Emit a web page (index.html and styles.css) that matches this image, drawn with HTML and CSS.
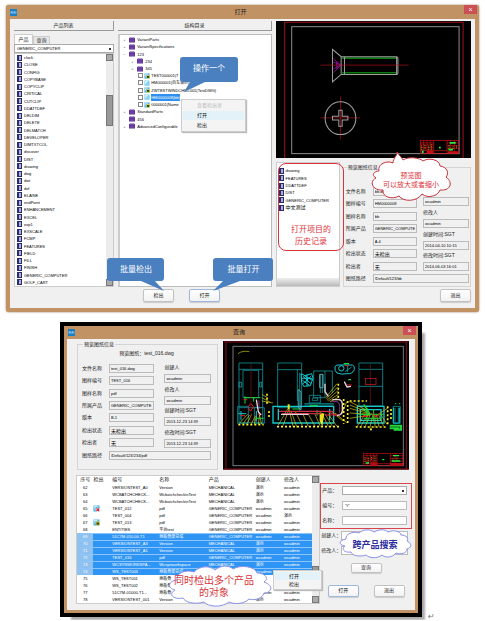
FILE: index.html
```html
<!DOCTYPE html>
<html lang="zh-CN">
<head>
    <meta charset="UTF-8">
    <meta name="viewport" content="width=device-width, initial-scale=1.0">
    <title>打开 / 查询</title>
    <link rel="stylesheet" href="styles.css">
</head>
<body>
<svg class="defs" width="0" height="0" aria-hidden="true">
    <symbol id="folder" viewBox="0 0 14 12">
        <rect x="0" y="1" width="14" height="11" rx="1" fill="#5a2a94"/>
        <rect x="2" y="0" width="4" height="3" fill="#8b62bd"/>
        <rect x="8" y="0" width="4" height="3" fill="#8b62bd"/>
        <path d="M1 6h12M1 9h12" stroke="#9a78c9"/>
    </symbol>
    <symbol id="doc" viewBox="0 0 16 16">
        <path d="M1 1h11l3 3v11H1z" fill="#7fd0f2"/>
        <path d="M3 4h7M3 7h5M3 10h3" stroke="#fff" stroke-width="2"/>
    </symbol>
    <symbol id="doc-lock" viewBox="0 0 16 16">
        <path d="M1 1h14v14H1z" fill="#58b7e6"/>
        <path d="M2 3h8M2 7h4" stroke="#fff" stroke-width="2"/>
        <circle cx="11" cy="10" r="5" fill="#f0d21c"/>
        <rect x="8" y="8" width="6" height="5" fill="#23402a"/>
    </symbol>
    <symbol id="doc-mark" viewBox="0 0 16 16">
        <path d="M1 1h14v14H1z" fill="#58b7e6"/>
        <path d="M2 3h8M2 7h4" stroke="#fff" stroke-width="2"/>
        <circle cx="11" cy="11" r="5" fill="#fff"/>
        <path d="M8 8l6 6M14 8l-6 6" stroke="#d8262c" stroke-width="3"/>
    </symbol>
    <symbol id="app" viewBox="0 0 18 18">
        <rect width="18" height="18" fill="#1c7fc4"/>
        <path d="M3 12V6l3 5V6M9 12l2-6 2 6M15 6v6" stroke="#bfe4ff" stroke-width="1.5" fill="none"/>
    </symbol>
</svg>

<!-- 打开窗口 -->
<section class="window open-window">
    <header class="titlebar">
        <svg class="app-icon"><use href="#app"/></svg>
        <h1>打开</h1>
        <button class="close" aria-label="关闭">×</button>
    </header>
    <div class="open-body">
        <div class="products">
            <h2 class="head">产品列表</h2>
            <div class="tabs">
                <button class="tab active">产品</button>
                <button class="tab">查询</button>
            </div>
            <select class="combo" aria-label="产品"><option>GENERIC_COMPUTER</option></select>
            <div class="list-box">
                <ul class="book-list">
                    <li>clock</li><li>CLOSE</li><li>CONFIG</li><li>COPYBASE</li>
                    <li>COPYCLIP</li><li>CRITICAL</li><li>CUTCLIP</li><li>DDATTDEF</li>
                    <li>DELDIM</li><li>DELETE</li><li>DELMATCH</li><li>DEVELOPER</li>
                    <li>DIMTXTCOL</li><li>discover</li><li>DIST</li><li>drawing</li>
                    <li>dwg</li><li>dwt</li><li>dxf</li><li>ELAINE</li>
                    <li>endPoint</li><li>ENHANCEMENT</li><li>EXCEL</li><li>exp1</li>
                    <li>EXSCALE</li><li>FCMP</li><li>FEATURES</li><li>FIELD</li>
                    <li>FILL</li><li>FINISH</li><li>GENERIC_COMPUTER</li><li>GOLF_CART</li>
                </ul>
                <div class="scrollbar"><i></i><b class="thumb"></b><i></i></div>
            </div>
        </div>

        <div class="structure">
            <h2 class="head">结构目录</h2>
            <div class="tree-box">
                <ul class="tree">
                    <li><span class="exp">+</span><svg><use href="#folder"/></svg>VariantParts</li>
                    <li><span class="exp">+</span><svg><use href="#folder"/></svg>VariantSpecifications</li>
                    <li><span class="exp">−</span><svg><use href="#folder"/></svg>123</li>
                    <li class="sub"><span class="exp">+</span><svg><use href="#folder"/></svg>234</li>
                    <li class="sub"><span class="exp">+</span><svg><use href="#folder"/></svg>345</li>
                    <li class="file"><label><input type="checkbox"><svg><use href="#doc-lock"/></svg><span>TEST000001(T</span></label></li>
                    <li class="file"><label><input type="checkbox"><svg><use href="#doc"/></svg><span>HM000001(自车演示)</span></label></li>
                    <li class="file"><label><input type="checkbox"><svg><use href="#doc-lock"/></svg><span>ZWTESTWINDCHILL001(TestDWG)</span></label></li>
                    <li class="file"><label><input type="checkbox"><svg><use href="#doc"/></svg><span class="selected">HM0000008(bb)</span></label></li>
                    <li class="file"><label><input type="checkbox"><svg><use href="#doc-lock"/></svg><span>0000001(Name</span></label></li>
                    <li><span class="exp">+</span><svg><use href="#folder"/></svg>StandardParts</li>
                    <li><span class="exp"></span><svg><use href="#folder"/></svg>456</li>
                    <li><span class="exp">+</span><svg><use href="#folder"/></svg>AdvancedConfigurable</li>
                </ul>
            </div>
        </div>

        <div class="detail">
            <svg class="preview" viewBox="18 67 585 411" role="img" aria-label="螺钉图纸">
                <rect x="18" y="67" width="585" height="411" fill="#000"/>
                <path d="M44 478V71H578V478" stroke="#a01018" stroke-width="3" fill="none"/>
                <rect x="65" y="84" width="501" height="380" stroke="#8c8c8c" stroke-width="3" fill="none"/>
                <path d="M216 178H380M216 222H380" stroke="#0b7a10" stroke-width="5"/>
                <path d="M187 152V249L213 227H379Q383 227 383 222V180Q383 174 379 174H213ZM213 174V227M223 174V227M379 174V227" stroke="#a0a0a0" stroke-width="3" fill="none"/>
                <path d="M190 180L212 199L190 222M190 190L212 199L190 210M200 190V210" stroke="#c016c8" stroke-width="2" fill="none"/>
                <path d="M151 199H415M151 357H270M211 293V422" stroke="#b3121c" stroke-width="2"/>
                <ellipse cx="211" cy="358" rx="46" ry="49" stroke="#a0a0a0" stroke-width="3" fill="none"/>
                <path d="M206 334H216V352H233V363H216V382H206V363H187V352H206Z" stroke="#a0a0a0" stroke-width="3" fill="none"/>
                <g fill="none" stroke="#d8101a" stroke-width="2">
                    <rect x="450" y="425" width="115" height="39"/>
                    <path d="M450 432H490M450 438H490M450 446H490M450 454H490M530 432H565M530 440H565M530 448H565M490 455H530M460 425V464M470 425V464M480 425V464M490 425V464M530 425V464M540 425V464M552 425V464"/>
                </g>
                <path d="M532 457h32v6h-32zM470 455h18v8h-18z" fill="#c80c14"/>
                <path d="M538 432H556M506 446h5M534 452h14M457 455v8" stroke="#24f03a" stroke-width="5"/>
                <path d="M454 440v14M464 438v16M475 440v14M484 436v18M536 438v12M548 442v10M558 440v10" stroke="#d8e020" stroke-width="2" stroke-dasharray="3 2"/>
            </svg>
            <div class="detail-lower">
                <div class="history">
                    <ul class="book-list">
                        <li>drawing</li><li>FEATURES</li><li>DDATTDEF</li>
                        <li>DIST</li><li>GENERIC_COMPUTER</li><li class="zh">中文测试</li>
                    </ul>
                    <div class="hscroll"></div>
                </div>
                <fieldset class="info">
                    <legend>预览图纸信息</legend>
                    <div class="fields">
                        <div class="field-list">
                            <label for="o-file">文件名称</label><input id="o-file" value="bb.dwg" readonly>
                            <label for="o-no">图样编号</label><input id="o-no" value="HM0000008" readonly>
                            <label for="o-name">图样名称</label><input id="o-name" value="bb" readonly>
                            <label for="o-prod">所属产品</label><input id="o-prod" value="GENERIC_COMPUTER" readonly>
                            <label for="o-ver">版本</label><input id="o-ver" value="A.4" readonly>
                            <label for="o-state">检出状态</label><input id="o-state" class="zh" value="未检出" readonly>
                            <label for="o-who">检出者</label><input id="o-who" class="zh" value="无" readonly>
                        </div>
                        <div class="meta-list">
                            <label for="o-cb">创建人</label><input id="o-cb" value="wcadmin" readonly>
                            <label for="o-mb">修改人</label><input id="o-mb" value="wcadmin" readonly>
                            <label for="o-ct">创建时间:SGT</label><input id="o-ct" value="2014-04-10 10:15" readonly>
                            <label for="o-mt">修改时间:SGT</label><input id="o-mt" value="2014-06-03 16:01" readonly>
                        </div>
                    </div>
                    <div class="path">
                        <label for="o-path">图纸路径</label><input id="o-path" value="/Default/123/bb" readonly>
                    </div>
                </fieldset>
            </div>
        </div>
    </div>
    <footer class="open-footer">
        <button class="btn">检出</button>
        <button class="btn focus">打开</button>
        <button class="btn last">退出</button>
    </footer>

    <div class="menu open-menu">
        <button disabled>查看检出者</button>
        <button class="hot">打开</button>
        <button>检出</button>
    </div>

    <!-- 标注 -->
    <div class="note note-one">
        <svg viewBox="0 0 58 36"><path d="M3 0H55Q58 0 58 3V22Q58 25 55 25H25L4 35L10 25H3Q0 25 0 22V3Q0 0 3 0Z"/></svg>
        <span>操作一个</span>
    </div>
    <div class="note note-checkout">
        <svg viewBox="0 0 58 36"><path d="M3 0H54Q57 0 57 3V20Q57 23 54 23H48L57 33L34 23H3Q0 23 0 20V3Q0 0 3 0Z"/></svg>
        <span>批量检出</span>
    </div>
    <div class="note note-open">
        <svg viewBox="0 0 61 36"><path d="M3 0H57Q60 0 60 3V20Q60 23 57 23H27L0 33L10 23H3Q0 23 0 20V3Q0 0 3 0Z"/></svg>
        <span>批量打开</span>
    </div>
    <div class="history-note">打开项目的<br>历史记录</div>
    <div class="cloud cloud-red">
        <svg viewBox="0 0 84 50">
            <path d="M10 19C8 12 18 8 24 11C24 6 29 3 28 0C30 3 33 6 34 8C40 4 51 6 54 9C60 5 71 8 71 14C79 15 80 22 77 25C85 31 81 39 71 38C69 44 59 47 53 42C48 50 34 50 30 44C23 48 13 45 14 38C3 39 0 29 7 26C2 23 5 19 10 19Z"/>
        </svg>
        <span>预览图<br>可以放大或者缩小</span>
    </div>
</section>

<!-- 查询窗口 -->
<section class="window query-window">
    <header class="titlebar">
        <svg class="app-icon"><use href="#app"/></svg>
        <h1>查询</h1>
        <button class="close" aria-label="关闭">×</button>
    </header>
    <div class="query-top">
        <fieldset class="info">
            <legend>预览图纸信息</legend>
            <p class="info-title">预览图纸：test_016.dwg</p>
            <div class="fields">
                <div class="field-list">
                    <label for="q-file">文件名称</label><input id="q-file" value="test_016.dwg" readonly>
                    <label for="q-no">图样编号</label><input id="q-no" value="TEST_016" readonly>
                    <label for="q-name">图样名称</label><input id="q-name" value="pdf" readonly>
                    <label for="q-prod">所属产品</label><input id="q-prod" value="GENERIC_COMPUTE" readonly>
                    <label for="q-ver">版本</label><input id="q-ver" value="B.1" readonly>
                    <label for="q-state">检出状态</label><input id="q-state" class="zh" value="未检出" readonly>
                    <label for="q-who">检出者</label><input id="q-who" class="zh" value="无" readonly>
                </div>
                <div class="meta-list">
                    <label for="q-cb">创建人</label><input id="q-cb" value="wcadmin" readonly>
                    <label for="q-mb">修改人</label><input id="q-mb" value="wcadmin" readonly>
                    <label for="q-ct">创建时间:SGT</label><input id="q-ct" value="2013-12-23 14:39" readonly>
                    <label for="q-mt">修改时间:SGT</label><input id="q-mt" value="2013-12-23 14:39" readonly>
                </div>
            </div>
            <div class="path">
                <label for="q-path">图纸路径</label><input id="q-path" value="/Default/123/234/pdf" readonly>
            </div>
        </fieldset>
        <svg class="preview" viewBox="24 80 558 386" role="img" aria-label="机床装配图">
            <rect x="24" y="80" width="558" height="386" fill="#000"/>
            <path d="M33 84V464M574 84V464M26 83H580M26 464H580" stroke="#8c0f18" stroke-width="3"/>
            <rect x="54" y="96" width="511" height="358" stroke="#777" stroke-width="3" fill="none"/>
            <path d="M69 118Q82 108 103 112" stroke="#c8c81a" stroke-width="2" fill="none"/>
            <g stroke="#0e9296" stroke-width="2.5" fill="none">
                <path d="M72 146H143V325H72ZM72 165H143M84 168H131V250H84ZM72 280H143"/>
                <path d="M188 146H260V280H188ZM188 166H260M247 166V260M254 175V290"/>
                <path d="M432 146H503V275H432ZM432 165H503M432 216H503"/>
                <path d="M296 170H330V250H296ZM330 170H352V236M316 180V236M322 180V236M283 243H316V266H283ZM268 268H356M268 272H356M292 251h16v8h-16z"/>
                <path d="M68 276H100V327H68ZM118 280H148V327H118ZM535 276H556V327H535ZM540 280V322M550 280V322"/>
            </g>
            <g stroke="#14c9d0" stroke-width="4" fill="none">
                <path d="M174 276H356V326H174ZM190 284V318M344 284V318M427 276H507V326H427ZM436 286H498V318H436Z"/>
                <path d="M78 290V318M70 298H94M124 290V322M535 280V326H553V280" stroke-width="3"/>
                <path d="M258 178L270 184L290 178L294 192L286 214L266 216L260 204ZM264 186L288 208M288 186L264 208M276 180V216M258 192H292M262 198L282 212M268 184L292 198" stroke-width="3"/>
                <path d="M360 158Q362 150 374 152H412Q420 154 418 166Q412 180 396 178Q380 182 366 176Q358 170 360 158Z" stroke-width="3"/>
                <circle cx="379" cy="162" r="8" stroke-width="3"/>
                <path d="M390 172L410 158M398 154V174" stroke-width="2"/>
                <path d="M72 204h8v14h-8zM134 204h6v14h-6z" stroke-width="2"/>
            </g>
            <path d="M249 226L258 232V286L250 280ZM314 180h10v40h-10z" stroke="#58a8ae" stroke-width="3" fill="none"/>
            <g stroke="#d6cf1a" stroke-width="2" fill="none">
                <path d="M74 326L98 300M84 328L104 302M96 328L110 300M108 330L122 304M118 330L124 306M130 330L134 300M140 330L132 296"/>
                <path d="M190 332L218 284M204 334L222 284M234 336L222 284M246 340L228 290M262 334L240 290M280 336L262 296M300 336L278 296M316 336L300 300M322 338L318 300M340 336L322 300M352 336L330 298M366 336L340 300M384 320L352 294M396 326L360 296"/>
                <path d="M332 250L366 208M334 254L368 218M336 258L370 228M340 260L370 240M345 262L372 248M380 300L395 262M404 262L460 290M404 272L460 294M404 282L462 298M404 296L464 300M404 312L466 302"/>
                <path d="M425 338L450 300M436 338L460 300M450 338L466 300M464 342L474 300M480 340L480 300M492 338L484 300M506 336L490 300M516 330L496 298M520 280L490 300M140 240L158 250M140 250L166 264M140 260L174 266"/>
            </g>
            <g stroke="#fff22a" stroke-width="5" stroke-dasharray="6 6">
                <path d="M70 331H146M186 337H372M422 338H514M398 260V328M518 276V330M370 208V252M528 284V320M386 254V328M404 260H456M156 238V274M162 290V308M465 345h10"/>
            </g>
            <path d="M314 294L328 298L322 334L314 320ZM218 270h6v14h-6z" fill="#e8e21a"/>
            <g stroke="#24d83c" stroke-width="3" fill="none">
                <path d="M88 250H136M90 246V268M116 250V262M124 312H146M232 284H254M284 274H308M306 288V304M440 282L458 296M446 312H500M456 280V326M476 284V322M430 300H506M540 268h4M552 268h4"/>
                <path d="M524 334H558V346H536M524 342h30" stroke-width="6"/>
                <path d="M386 148h16M400 196h8M446 270L466 300" stroke-width="4"/>
            </g>
            <g stroke="#e21a2a" stroke-width="3" fill="none">
                <path d="M108 150V325M466 150V274" stroke="#7c1420" stroke-width="2"/>
                <path d="M192 291H356M202 298H320" stroke="#c83040" stroke-width="4"/>
                <path d="M98 278L106 290L116 278L108 268ZM86 256h10M338 292L366 304M330 302H372M76 304h14M128 300h12M468 296L484 308L494 296M440 306h20M390 154h12M396 212h14"/>
                <rect x="452" y="192" width="31" height="18" stroke-width="2"/>
            </g>
            <path d="M124 256L130 292L138 302M330 208V232L340 246M352 256H372Q382 258 382 270V288Q382 302 366 304M198 300H280M388 202L396 218L408 216" stroke="#e8d4dc" stroke-width="4" fill="none"/>
            <path d="M346 262H366Q374 264 374 276V296M132 258V284" stroke="#c24cb8" stroke-width="2" fill="none"/>
            <g fill="none" stroke="#c80f1a" stroke-width="2">
                <rect x="446" y="418" width="118" height="36"/>
                <path d="M446 424H486M446 432H486M446 440H486M446 448H564M526 424H564M526 432H564M526 440H564M456 418V454M466 418V454M476 418V454M486 418V454M526 418V454M540 418V454"/>
            </g>
            <path d="M526 446h38v8h-38zM468 444h18v10h-18z" fill="#b80c14"/>
            <path d="M534 424H552M502 436h6M452 446h10M530 440h26" stroke="#1cf03a" stroke-width="4"/>
            <path d="M450 428v16M460 430v16M470 428v12M480 426v16M534 432v12M546 430v12" stroke="#d8d820" stroke-width="2" stroke-dasharray="3 3"/>
        </svg>
    </div>
    <div class="query-bottom">
        <div class="result">
            <table>
                <colgroup><col class="c-id"><col class="c-out"><col class="c-no"><col class="c-name"><col class="c-prod"><col class="c-by"><col class="c-mod"></colgroup>
                <thead>
                <tr><th>序号</th><th>检出</th><th>编号</th><th>名称</th><th>产品</th><th>创建人</th><th>修改人</th></tr>
                </thead>
                <tbody>
                <tr><td>62</td><td></td><td>VERSIONTEST_A0</td><td>Version</td><td>MECHANICAL</td><td>演示</td><td>wcadmin</td></tr>
                <tr><td>63</td><td></td><td>WCBATCHCHECK...</td><td>WcbatchcheckinTest</td><td>MECHANICAL</td><td>演示</td><td>wcadmin</td></tr>
                <tr><td>64</td><td></td><td>WCBATCHCHECK...</td><td>WcbatchcheckinTest</td><td>MECHANICAL</td><td>演示</td><td>wcadmin</td></tr>
                <tr><td>65</td><td><svg><use href="#doc-mark"/></svg></td><td>TEST_012</td><td>pdf</td><td>GENERIC_COMPUTER</td><td>wcadmin</td><td>wcadmin</td></tr>
                <tr><td>66</td><td></td><td>TEST_004</td><td>pdf</td><td>GENERIC_COMPUTER</td><td>wcadmin</td><td>演示</td></tr>
                <tr><td>67</td><td><svg><use href="#doc-lock"/></svg></td><td>TEST_013</td><td>pdf</td><td>GENERIC_COMPUTER</td><td>wcadmin</td><td>wcadmin</td></tr>
                <tr><td>68</td><td></td><td>ENTITIES</td><td>平台test</td><td>GENERIC_COMPUTER</td><td>wcadmin</td><td>wcadmin</td></tr>
                <tr class="on"><td>69</td><td></td><td>51C7M-010,00-T1</td><td>地板骨架总成</td><td>GENERIC_COMPUTER</td><td>wcadmin</td><td>wcadmin</td></tr>
                <tr class="on"><td>70</td><td></td><td>VERSIONTEST_A3</td><td>Version</td><td>MECHANICAL</td><td>演示</td><td>wcadmin</td></tr>
                <tr class="on"><td>71</td><td></td><td>VERSIONTEST_A1</td><td>Version</td><td>MECHANICAL</td><td>演示</td><td>wcadmin</td></tr>
                <tr class="on"><td>72</td><td></td><td>TEST_016</td><td>pdf</td><td>GENERIC_COMPUTER</td><td>wcadmin</td><td>wcadmin</td></tr>
                <tr class="on"><td>73</td><td></td><td>WCSYNWORKSPA...</td><td>Wcsynworkspace</td><td>MECHANICAL</td><td>演示</td><td>wcadmin</td></tr>
                <tr class="on"><td>74</td><td></td><td>WS_TEST003</td><td>地板骨架总成</td><td></td><td>wcadmin</td><td></td></tr>
                <tr><td>75</td><td></td><td>WS_TEST001</td><td>地板骨</td><td></td><td></td><td></td></tr>
                <tr><td>76</td><td></td><td>WS_TEST002</td><td>地板骨</td><td></td><td></td><td></td></tr>
                <tr><td>77</td><td></td><td>51C7M-01000-T1...</td><td>地板骨</td><td></td><td>wcadmin</td><td>wcadmin</td></tr>
                <tr><td>78</td><td></td><td>VERSIONTEST_001</td><td>Version</td><td></td><td>演示</td><td>wcadmin</td></tr>
                </tbody>
            </table>
            <div class="scrollbar low"><i></i><b class="thumb"></b><i></i></div>
        </div>
        <form class="search">
            <div class="search-main">
                <label for="s-prod">产品：</label><select id="s-prod" class="combo"><option></option></select>
                <label for="s-no">编号：</label><input id="s-no" value="*t*">
                <label for="s-name">名称：</label><input id="s-name">
            </div>
            <div class="search-more">
                <label for="s-by">创建人：</label><input id="s-by">
                <label for="s-mod">修改人：</label><input id="s-mod">
            </div>
            <button type="button" class="btn find">查询</button>
            <div class="search-actions">
                <button type="button" class="btn focus">打开</button>
                <button type="button" class="btn">退出</button>
            </div>
        </form>
    </div>

    <div class="menu query-menu">
        <button class="hot">打开</button>
        <button>检出</button>
    </div>
    <div class="cloud cloud-multi">
        <svg viewBox="0 0 108 42">
            <path d="M12 15C11 8 21 4 29 7C35 0 46 1 50 5C56 0 64 0 68 4C76 -1 91 2 92 8C101 8 104 14 99 17C110 21 106 28 99 28C98 33 90 36 84 34C78 40 68 39 64 37C57 43 43 42 39 37C29 40 20 37 18 33C8 35 3 29 10 25C2 23 3 16 12 15Z"/>
        </svg>
        <span>同时检出多个产品<br>的对象</span>
    </div>
    <div class="cloud cloud-cross">
        <svg viewBox="0 0 74 30">
            <path d="M8 10C7 5 15 2 21 4C25 0 32 0 36 3C41 0 47 0 50 3C56 0 63 3 63 6C69 6 71 10 69 12C75 15 73 19 69 20C69 24 63 26 58 24C54 29 47 29 44 26C39 30 31 29 28 26C22 28 14 27 13 23C6 24 3 20 7 17C0 16 1 11 8 10Z"/>
        </svg>
        <span>跨产品搜索</span>
    </div>
</section>
<p class="return">↵</p>
</body>
</html>
```
FILE: styles.css
```css
* {
    box-sizing: border-box;
}
body {
    margin: 0;
    padding: 5px 6px 0;
    background: #fff;
    color: #222;
    font-family: "Liberation Sans", "Noto Sans CJK SC", sans-serif;
    font-size: 5px;
    line-height: 7px;
}
h1, h2, p, ul {
    margin: 0;
    padding: 0;
    font-weight: normal;
}
ul {
    list-style: none;
}
button, input, select {
    font: inherit;
    color: inherit;
    margin: 0;
    padding: 0;
    min-width: 0;
    border-radius: 0;
}
input, .combo, .book-list, .tree, td {
    color: #000;
    font-size: 4px;
}
.zh {
    font-size: 5px;
}
.defs {
    position: absolute;
}

/* 窗口 */
.window {
    position: relative;
    background: #f0f0f0;
    border: 4px solid #c19263;
    border-top: 0;
}
.open-window {
    border-radius: 3px;
    box-shadow: 0 0 2px #8a6a48;
}
.titlebar {
    display: flex;
    align-items: center;
    height: 14px;
    margin: 0 -4px;
    background: #c19263;
}
.open-window .titlebar {
    border-radius: 3px 3px 0 0;
}
.app-icon {
    width: 7px;
    height: 7px;
    margin-left: 4px;
}
.titlebar h1 {
    flex: 1;
    text-align: center;
    font-size: 6px;
}
.close {
    align-self: flex-start;
    width: 13px;
    height: 9px;
    margin-right: 2px;
    border: 0;
    background: #cb4f55;
    color: #fff;
    font-size: 7px;
    line-height: 8px;
}

/* 打开窗口主体 */
.open-body {
    display: grid;
    grid-template-columns: 100fr 153fr 195fr;
    gap: 4px;
    padding: 2px 4px 0;
    min-height: 268px;
}
.products, .structure, .detail {
    display: flex;
    flex-direction: column;
    min-width: 0;
}
.head {
    height: 10px;
    line-height: 9px;
    font-size: 5px;
    text-align: center;
    border-right: 1px solid #999;
    border-bottom: 1px solid #999;
}
.tabs {
    display: flex;
    align-items: flex-end;
    margin-top: 3px;
}
.tab {
    height: 8px;
    width: 17px;
    border: 1px solid #ccc;
    border-bottom: 0;
    background: #e6e6e6;
}
.tab.active {
    height: 10px;
    width: 19px;
    background: #fff;
}
.combo {
    appearance: none;
    width: 100%;
    height: 9px;
    padding-left: 2px;
    border: 1px solid #aaa;
    background: #fff linear-gradient(#333, #333) no-repeat right 2px center / 2px 2px;
}
.list-box {
    display: flex;
    flex: 1;
    background: #fff;
    border: 1px solid #ccc;
}
.book-list {
    display: grid;
    grid-auto-rows: 1fr;
    flex: 1;
    padding-left: 2px;
}
.book-list li {
    display: flex;
    align-items: center;
    gap: 2px;
    line-height: 7px;
}
.book-list li::before {
    content: "";
    box-sizing: border-box;
    width: 5px;
    height: 6px;
    border: 1px solid #2b2c6d;
    border-left-width: 2px;
    background: #a9b0dc;
}
.scrollbar {
    display: flex;
    flex-direction: column;
    width: 7px;
    background: #ececec;
}
.scrollbar i {
    height: 7px;
    border: 1px solid #777;
    background: #aaa;
}
.scrollbar .thumb {
    flex: 0 0 31px;
    margin: 34px 0 auto;
    border: 1px solid #777;
    background: #999;
}
.scrollbar.low .thumb {
    flex-basis: 10px;
    margin: auto 0 20px;
}

/* 结构树 */
.tree-box {
    flex: 1;
    margin-top: 3px;
    padding-left: 3px;
    background: #fff;
    border: 1px solid #bbb;
    border-left: 2px solid #ccc;
}
.tree {
    display: grid;
    grid-template-rows: repeat(13, 1fr);
    height: 94px;
    margin-top: 1px;
}
.tree li, .tree label {
    display: flex;
    align-items: center;
    gap: 2px;
    white-space: nowrap;
}
.tree li {
    line-height: 7px;
}
.tree .sub {
    padding-left: 8px;
}
.tree .file {
    padding-left: 15px;
}
.tree svg {
    width: 6px;
    height: 6px;
}
.tree label {
    gap: 1px;
}
.exp {
    width: 4px;
    color: #555;
}
.tree input {
    appearance: none;
    width: 5px;
    height: 5px;
    border: 1px solid #888;
    background: #fff;
}
.selected {
    background: #2f8fee;
    color: #fff;
}

/* 预览和信息 */
.preview {
    display: block;
    width: 100%;
}
.detail-lower {
    display: grid;
    grid-template-columns: 64fr 128fr;
    gap: 3px;
    flex: 1;
    margin-top: 4px;
}
.history {
    display: flex;
    flex-direction: column;
    background: #fff;
    border: 1px solid #ccc;
}
.history .book-list {
    flex: 0 0 44px;
    margin-top: 4px;
}
.hscroll {
    height: 8px;
    margin-top: auto;
    background: linear-gradient(#eee, #bbb);
}
.info {
    min-width: 0;
    margin: 0;
    padding: 0 1px 0 2px;
    border: 1px solid #d4d4d4;
}
.info legend {
    padding: 0 1px;
    margin-left: 1px;
}
.info input {
    width: 100%;
    height: 9px;
    padding: 0 1px;
    border: 1px solid #bbb;
    background: #f0f0f0;
}
.fields {
    display: grid;
    grid-template-columns: 73fr 47fr;
    gap: 6px;
    height: 87px;
}
.field-list {
    display: grid;
    grid-template-columns: 27px 1fr;
    grid-auto-rows: 1fr;
    align-items: center;
}
.meta-list {
    display: grid;
    grid-auto-rows: 1fr;
    align-items: center;
}
.path {
    display: grid;
    grid-template-columns: 27px 1fr;
    align-items: center;
    height: 12px;
}
.open-window .info {
    margin-top: 2px;
}
.open-window .fields {
    margin-top: 14px;
}

.btn {
    width: 31px;
    height: 13px;
    border: 1px solid #c2c2c2;
    border-radius: 2px;
    background: linear-gradient(#fff, #f2f2f2);
    box-shadow: 0 1px 1px #ccc;
}
.btn.focus {
    border-color: #9db8dc;
}
.open-footer {
    display: flex;
    gap: 15px;
    height: 21px;
    padding: 2px 4px 0 133px;
}
.open-footer .last {
    margin-left: auto;
}

/* 右键菜单 */
.menu {
    position: absolute;
    display: flex;
    flex-direction: column;
    padding: 1px;
    border: 1px solid #ccc;
    background: #f4f4f4;
    box-shadow: 1px 1px 1px #bbb;
}
.menu button {
    flex: 1;
    padding-left: 14px;
    border: 0;
    background: none;
    text-align: left;
}
.menu .hot {
    background: #e3f2f9;
}
.menu button:disabled {
    color: #bbb;
}
.open-menu {
    left: 171px;
    top: 94px;
    width: 65px;
    height: 33px;
}
.query-menu {
    right: 93px;
    top: 244px;
    width: 49px;
    height: 20px;
}

/* 标注 */
.note, .cloud {
    position: absolute;
}
.note svg, .cloud svg {
    display: block;
    width: 100%;
    overflow: visible;
}
.note span, .cloud span {
    position: absolute;
    left: 0;
    width: 100%;
    text-align: center;
    white-space: nowrap;
}
.note {
    color: #fff;
    font-size: 8px;
    line-height: 23px;
}
.note path {
    fill: #4a7fc0;
}
.note span {
    top: 0;
}
.note-one {
    left: 170px;
    top: 52px;
    width: 58px;
}
.note-checkout {
    left: 97px;
    top: 253px;
    width: 58px;
}
.note-open {
    left: 203px;
    top: 253px;
    width: 61px;
}
.history-note {
    position: absolute;
    right: 131px;
    top: 158px;
    width: 66px;
    height: 88px;
    padding-top: 60px;
    border: 1px solid #d8343a;
    border-radius: 8px;
    color: #e0343a;
    font-size: 8px;
    line-height: 12px;
    text-align: center;
}
.cloud path {
    fill: #fff;
}
.cloud-red {
    right: 22px;
    top: 147px;
    width: 84px;
    color: #e0343a;
    font-size: 7px;
    line-height: 9px;
}
.cloud-red path {
    stroke: #c8323a;
}
.cloud-red span {
    top: 19px;
}
.cloud-multi {
    left: 98px;
    top: 239px;
    width: 108px;
    color: #d8343a;
    font-size: 10px;
    line-height: 12px;
}
.cloud-multi path, .cloud-cross path {
    stroke: #8a8fea;
}
.cloud-multi span {
    top: 10px;
    padding-right: 10px;
}
.cloud-cross {
    right: 3px;
    top: 203px;
    width: 74px;
    color: #2a2a9c;
    font-size: 9px;
    font-weight: bold;
    line-height: 12px;
}
.cloud-cross span {
    top: 10px;
}

/* 查询窗口 */
.query-window {
    margin: 14px 61px 0 58px;
    border-width: 0 3px 3px;
    outline: 4px solid #000;
    box-shadow: 7px 7px 2px #aaa;
}
.query-window .titlebar {
    height: 13px;
    margin: 0 -3px;
}
.query-top {
    display: grid;
    grid-template-columns: 141fr 186fr;
    gap: 5px;
    padding: 2px 6px 0 10px;
}
.query-top .info {
    padding: 0 6px 0 4px;
}
.info-title {
    padding: 2px 0 5px;
    text-align: center;
}
.query-top .fields {
    gap: 10px;
}
.query-bottom {
    display: grid;
    grid-template-columns: 245fr 92fr;
    padding: 5px 3px 6px 9px;
}
.result {
    display: flex;
    min-width: 0;
    background: #fff;
    border: 1px solid #ccc;
}
table {
    flex: 1;
    width: 100%;
    min-width: 0;
    table-layout: fixed;
    border-collapse: collapse;
}
th, td {
    height: 7px;
    padding: 0;
    white-space: nowrap;
    text-align: left;
    font-weight: normal;
    line-height: 7px;
}
th {
    height: 8px;
}
th:first-child, td:first-child {
    text-align: center;
}
td svg {
    display: block;
    width: 7px;
    height: 7px;
}
.c-id { width: 7%; }
.c-out { width: 8%; }
.c-no { width: 20%; }
.c-name { width: 21%; }
.c-prod { width: 20%; }
.c-by { width: 12%; }
.c-mod { width: 12%; }
.on td {
    background: #2f95f5;
    color: #fff;
    border-top: 1px solid #8ec5fa;
    line-height: 6px;
}
.on td:first-child {
    background: #8ec0f0;
}
.search {
    display: flex;
    flex-direction: column;
    padding-top: 8px;
}
.search-main, .search-more {
    display: grid;
    grid-template-columns: 20px 1fr;
    align-items: center;
    padding: 0 4px 0 1px;
    white-space: nowrap;
}
.search-main {
    height: 46px;
    border: 1px solid #d8454b;
}
.search-more {
    height: 29px;
}
.search input {
    width: 100%;
    height: 9px;
    padding-left: 2px;
    border: 1px solid #bbb;
    background: #fff;
}
.find {
    align-self: center;
    height: 10px;
    margin-top: 5px;
}
.search-actions {
    display: flex;
    justify-content: space-around;
    margin-top: 12px;
}
.search-actions .btn {
    height: 12px;
}
.return {
    margin-left: 422px;
    color: #777;
    font-family: "DejaVu Sans", sans-serif;
    font-size: 8px;
}
```
